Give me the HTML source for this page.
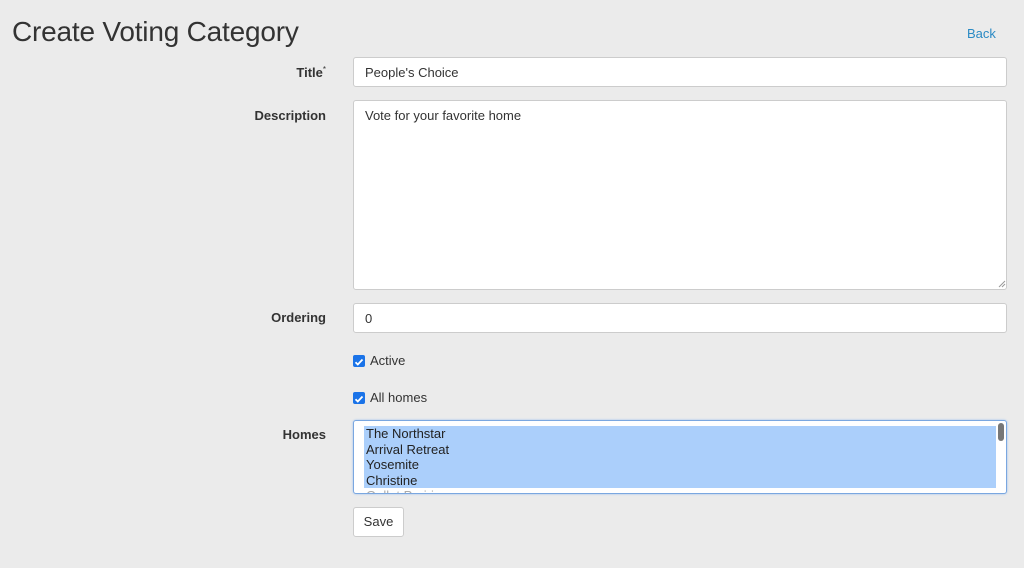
<!DOCTYPE html>
<html><head><meta charset="utf-8"><style>
*{box-sizing:border-box;margin:0;padding:0}
body{width:1024px;height:568px;background:#ebebeb;font-family:"Liberation Sans",sans-serif;color:#333;position:relative;overflow:hidden}
.abs{position:absolute}
h1{position:absolute;left:12px;top:16px;font-size:28px;font-weight:normal;color:#333;letter-spacing:-0.2px}
.back{left:967px;top:26px;font-size:13px;color:#2a8ac4}
.lbl{font-size:13px;font-weight:bold;color:#333;text-align:right;width:326px;left:0}
.inp{left:353px;width:654px;background:#fff;border:1px solid #ccc;border-radius:3px;font-size:13px;padding:0 11px}
.cb{left:353px;width:12px;height:12px;background:#1a73e8;border-radius:2px}
.cbl{left:370px;font-size:13px}
</style></head><body>
<h1>Create Voting Category</h1>
<div class="abs back">Back</div>

<div class="abs lbl" style="top:65px">Title<span style="font-size:8px;position:relative;top:-5px;font-weight:normal">*</span></div>
<div class="abs inp" style="top:57px;height:30px;line-height:29px">People's Choice</div>

<div class="abs lbl" style="top:108px">Description</div>
<div class="abs inp" style="top:100px;height:190px;padding-top:7px">Vote for your favorite home</div>
<svg class="abs" style="left:997px;top:279px" width="9" height="9" viewBox="0 0 9 9"><path d="M8 2L2 8M8 5L5 8" stroke="#999" stroke-width="1"/></svg>

<div class="abs lbl" style="top:310px">Ordering</div>
<div class="abs inp" style="top:303px;height:30px;line-height:29px">0</div>

<div class="abs cb" style="top:355px"><svg width="12" height="12" viewBox="0 0 12 12"><path d="M2.5 6.2l2.3 2.3 4.7-5" stroke="#fff" stroke-width="1.8" fill="none"/></svg></div>
<div class="abs cbl" style="top:353px">Active</div>
<div class="abs cb" style="top:392px"><svg width="12" height="12" viewBox="0 0 12 12"><path d="M2.5 6.2l2.3 2.3 4.7-5" stroke="#fff" stroke-width="1.8" fill="none"/></svg></div>
<div class="abs cbl" style="top:390px">All homes</div>

<div class="abs lbl" style="top:427px">Homes</div>
<div class="abs" style="left:353px;top:420px;width:654px;height:74px;background:#fff;border:1px solid #7aa7e0;border-radius:3px;box-shadow:0 0 2px #9cc0ef;overflow:hidden">
  <div class="abs" style="left:10px;top:5px;width:632px;height:62px;background:#abcffb"></div>
  <div class="abs" style="left:12px;top:5px;font-size:13px;line-height:15.5px;color:#222">The Northstar<br>Arrival Retreat<br>Yosemite<br>Christine<br><span style="color:#aaa">Gallat Prairie</span></div>
  <div class="abs" style="left:644px;top:2px;width:6px;height:18px;background:#777;border-radius:3px"></div>
</div>

<div class="abs" style="left:353px;top:507px;width:51px;height:30px;background:#fff;border:1px solid #ccc;border-radius:3px;font-size:13px;text-align:center;line-height:28px">Save</div>
</body></html>
